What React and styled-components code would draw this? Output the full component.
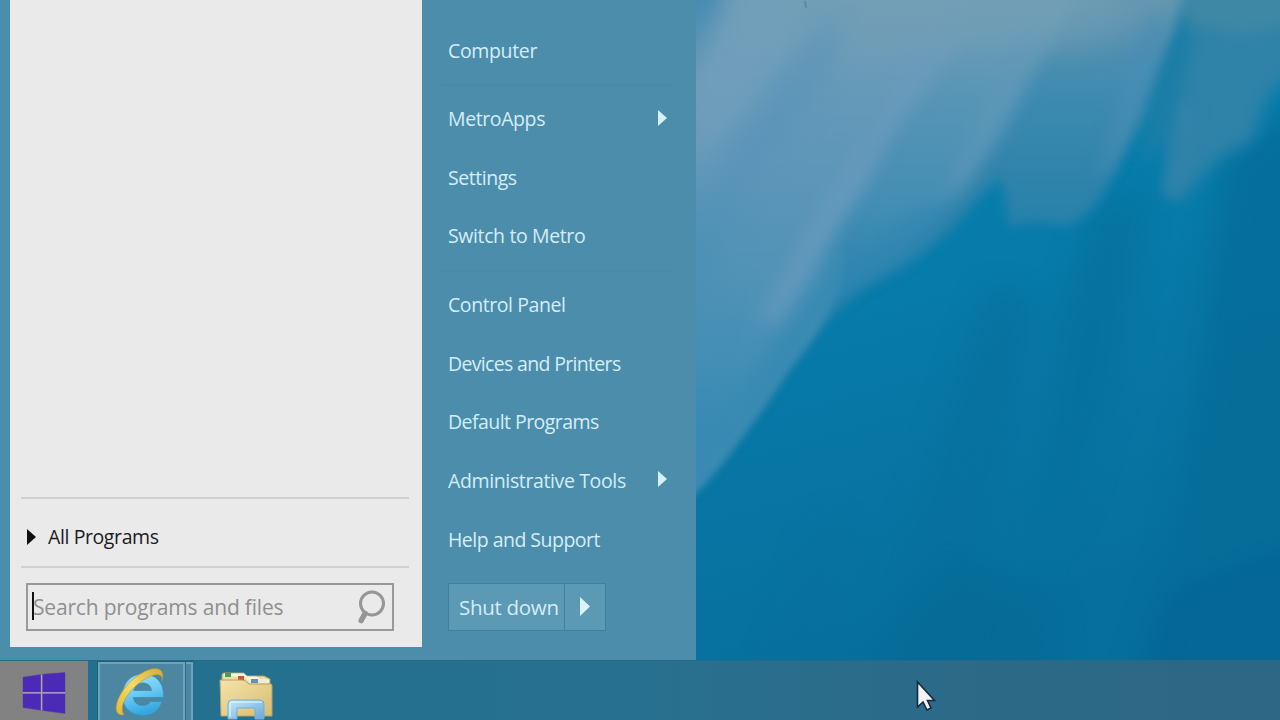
import React from "react";
import styled, { createGlobalStyle } from "styled-components";

const Global = createGlobalStyle`
  * { box-sizing: border-box; }
  html, body { margin: 0; padding: 0; }
  body {
    font-family: "Open Sans", "Noto Sans", sans-serif;
    overflow: hidden;
  }
`;

const Desktop = styled.div`
  position: relative;
  width: 1280px;
  height: 720px;
  display: grid;
  grid-template-rows: 660px 60px;
  overflow: hidden;
  background: #0674a2;
`;

const Workspace = styled.div`
  display: flex;
  min-height: 0;
`;

const StartMenu = styled.div`
  width: 696px;
  height: 660px;
  flex: none;
  display: flex;
  padding: 0 0 13px 10px;
  background: #4b8dab;
`;

const ProgramsPane = styled.div`
  width: 412px;
  display: flex;
  flex-direction: column;
  justify-content: flex-end;
  padding: 0 13px 16px 11px;
  background: #eaeaea;
`;

const PaneRule = styled.div`
  height: 2px;
  background: #d0d0d0;
`;

const AllPrograms = styled.div`
  height: 67px;
  display: flex;
  align-items: center;
  padding: 8px 0 0 6px;
  gap: 12px;
  color: #1c1a22;
  font-size: 19.5px;
`;

const SearchBox = styled.div`
  width: 368px;
  height: 48px;
  margin: 15px 0 0 5px;
  display: flex;
  align-items: center;
  justify-content: space-between;
  padding: 0 6px 0 5px;
  border: 2px solid #999;
  color: #8f8f8f;
  font-size: 21px;
`;

const Field = styled.div`
  display: flex;
  align-items: center;
`;

const Caret = styled.div`
  width: 2px;
  height: 28px;
  margin: 0 -1px 2px -1px;
  background: #111;
`;

const Label = styled.span`
  white-space: pre;
  line-height: 28px;
  letter-spacing: ${(p) => p.$track || 0}px;
`;

const LinksPane = styled.div`
  width: 274px;
  display: flex;
  flex-direction: column;
  padding: 21.4px 22px 0 20px;
  color: #d4edf8;
  font-size: 19.5px;
`;

const MenuLink = styled.div`
  height: 58.7px;
  flex: none;
  display: flex;
  align-items: center;
  justify-content: space-between;
  padding: 0 7px 0 6px;
`;

const LinkRule = styled.div`
  height: 9.7px;
  flex: none;
  display: flex;
  align-items: center;
  &::before {
    content: "";
    flex: 1;
    height: 2px;
    background: #488aa9;
  }
`;

const ArrowSlot = styled.span`
  display: flex;
  padding-bottom: ${(p) => p.$lift || 0}px;
`;

const PowerGroup = styled.div`
  width: 158px;
  height: 48px;
  margin: 13.6px 0 0 6px;
  display: flex;
  border: 1px solid #3d7f9f;
  background: #5c99b5;
  font-size: 20.5px;
`;

const PowerButton = styled.div`
  width: ${(p) => p.$w}px;
  display: flex;
  align-items: center;
  justify-content: ${(p) => (p.$split ? "center" : "flex-start")};
  padding-left: ${(p) => (p.$split ? 0 : 10)}px;
  border-left: ${(p) => (p.$split ? "1px solid #417f9f" : "0")};
`;

const Wallpaper = styled.svg`
  display: block;
  flex: none;
`;

const Taskbar = styled.div`
  display: flex;
  border-top: 1px solid #246987;
  background: linear-gradient(90deg, #21708f 0%, #28708f 50%, #2c6a88 75%, #2c6785 100%);
`;

const StartButton = styled.div`
  width: 88px;
  height: 59px;
  padding: 11px 0 0 22px;
  background: #828282;
`;

const TaskStack = styled.div`
  width: 96px;
  height: 59px;
  margin-left: 9px;
  display: flex;
  border: 1px solid #1f5f7c;
  border-right: 0;
  border-bottom: 0;
`;

const TaskButton = styled.div`
  width: ${(p) => p.$w}px;
  height: 58px;
  display: flex;
  padding: ${(p) => p.$pad || "0"};
  border: 2px solid #6fa3ba;
  border-bottom: 0;
  background: #4c86a1;
  & + & {
    margin-left: 1px;
    border-left-width: 0;
  }
`;

const PinnedButton = styled.div`
  padding: 9px 0 0 25px;
`;

const Pointer = styled.svg`
  position: absolute;
  left: 914px;
  top: 679px;
`;

const Arrow = ({ color, w = 9, h = 16 }) => (
  <svg width={w} height={h} viewBox="0 0 9 16" preserveAspectRatio="none">
    <path d="M0 0L9 8L0 16Z" fill={color} />
  </svg>
);

const Magnifier = () => (
  <svg width="30" height="36" viewBox="0 0 30 36" fill="none" stroke="#969696">
    <circle cx="16" cy="14.500" r="11.500" strokeWidth="3" />
    <path d="M9 24.500L5.200 31.500" strokeWidth="5.500" strokeLinecap="round" />
  </svg>
);

const WindowsLogo = () => (
  <svg width="46" height="44" viewBox="0 0 46 44">
    <g fill="#4b2bb5" stroke="#5a3aa0" strokeWidth=".5">
      <path d="M1 5.2L18.7 2.6V20H1Z" />
      <path d="M20.5 2.3L43 .5V20H20.5Z" />
      <path d="M1 21.5H18.7V38.3L1 35.6Z" />
      <path d="M20.5 21.5H43V41.5L20.5 38.5Z" />
    </g>
    <path d="M19.6 2.5V38.5M1 20.8H43" stroke="#b5a0cc" strokeWidth="1.2" />
  </svg>
);

const InternetExplorer = () => (
  <svg width="56" height="54" viewBox="0 0 56 54">
    <defs>
      <linearGradient id="ieBlue" x1="0" y1="0" x2="0.3" y2="1">
        <stop offset="0" stopColor="#a4e0f7" />
        <stop offset=".5" stopColor="#70cdf4" />
        <stop offset="1" stopColor="#35a7e0" />
      </linearGradient>
      <linearGradient id="ieGold" x1="1" y1="0" x2="0" y2="1">
        <stop offset="0" stopColor="#d3a935" />
        <stop offset=".5" stopColor="#f5dc66" />
        <stop offset="1" stopColor="#e0b83a" />
      </linearGradient>
    </defs>
    <path
      fillRule="evenodd"
      fill="url(#ieBlue)"
      stroke="#3a8db9"
      strokeWidth=".7"
      d="M50.500 30.500H20.500C21 35.500 24.500 38.500 29.500 38.500C33.500 38.500 36 37 37.500 34.500H49C46.500 43.500 39.500 48.500 30 48.500C17.500 48.500 9.500 40.500 9.500 28.500C9.500 16 18 7 30 7C43 7 51.500 16 50.500 30.500ZM20.800 23.500H38.500C38 18.500 34.500 16 29.800 16C25 16 21.700 19 20.800 23.500Z"
    />
    <path
      fill="url(#ieGold)"
      stroke="#b8922e"
      strokeWidth=".6"
      d="M47.500 8.500C43 5.500 31 10.500 20.500 21C10 31.500 7 42.500 11 47.500C4.500 49.500 1 44 4.500 34C9 21 23 6.500 37.500 2.200C46.500 -.2 52 4 49 13.500C49.200 11 48.800 9.500 47.500 8.500Z"
    />
  </svg>
);

const Explorer = () => (
  <svg width="58" height="50" viewBox="-1 0 58 50">
    <defs>
      <linearGradient id="folderFace" x1="0" y1="0" x2="1" y2="1">
        <stop offset="0" stopColor="#f5e3aa" />
        <stop offset="1" stopColor="#d8bd72" />
      </linearGradient>
      <linearGradient id="standBlue" x1="0" y1="0" x2="1" y2="1">
        <stop offset="0" stopColor="#c5e8fa" />
        <stop offset="1" stopColor="#66a9d8" />
      </linearGradient>
    </defs>
    <path d="M3 5Q3 3 5 3H25L28 6H45L51 9V20H3Z" fill="#e8dda9" stroke="#b39d5b" />
    <path d="M5 5H24L28 8H37L41 11H50" fill="none" stroke="#f7f4e5" strokeWidth="3" />
    <rect x="6" y="3" width="6" height="4" fill="#3ea34b" />
    <rect x="19" y="6" width="6" height="4" fill="#c65a31" />
    <path d="M1 10H23Q27 10 30 14H52Q53 14 53 16V46H2Z" fill="url(#folderFace)" stroke="#bba062" />
    <path d="M28 9H46L50 13H31Z" fill="#f0ecd8" />
    <rect x="32" y="9" width="7" height="4" fill="#5795bb" />
    <path
      d="M9 49V34Q9 30 13 30H41Q45 30 45 34V49H36V38H18V49Z"
      fill="url(#standBlue)"
      stroke="#75afd4"
    />
    <path d="M11 32H43M11 33V47" stroke="#e4f7ff" strokeWidth="1.500" opacity=".75" />
  </svg>
);

const Blur = ({ id, amount }) => (
  <filter id={id} filterUnits="userSpaceOnUse" x="600" y="-100" width="780" height="860" colorInterpolationFilters="sRGB">
    <feGaussianBlur stdDeviation={amount} />
  </filter>
);

const Scenery = () => (
  <Wallpaper width="584" height="660" viewBox="696 0 584 660">
    <defs>
      <linearGradient id="deep" x1="0" y1="0" x2=".25" y2="1">
        <stop offset="0" stopColor="#0783b0" />
        <stop offset=".5" stopColor="#077baa" />
        <stop offset="1" stopColor="#076f9d" />
      </linearGradient>
      <linearGradient id="outer" gradientUnits="userSpaceOnUse" x1="0" y1="0" x2="0" y2="260">
        <stop offset="0" stopColor="#6396b0" />
        <stop offset=".35" stopColor="#3f8bb0" />
        <stop offset=".75" stopColor="#2c82aa" />
        <stop offset="1" stopColor="#2280ab" />
      </linearGradient>
      <linearGradient id="middle" gradientUnits="userSpaceOnUse" x1="0" y1="0" x2="0" y2="330">
        <stop offset="0" stopColor="#729fb5" />
        <stop offset=".3" stopColor="#5795b5" />
        <stop offset=".6" stopColor="#458eb3" />
        <stop offset="1" stopColor="#2080ae" />
      </linearGradient>
      <linearGradient id="inner" gradientUnits="userSpaceOnUse" x1="0" y1="0" x2="0" y2="480">
        <stop offset="0" stopColor="#719eb8" />
        <stop offset=".3" stopColor="#6097b9" />
        <stop offset=".6" stopColor="#4f92b6" />
        <stop offset="1" stopColor="#2f87b3" />
      </linearGradient>
      <Blur id="soft3" amount="3.500" />
      <Blur id="soft5" amount="5.500" />
      <Blur id="soft8" amount="8" />
      <Blur id="soft14" amount="14" />
    </defs>
    <rect x="696" y="0" width="584" height="660" fill="url(#deep)" />
    <g filter="url(#soft14)">
      <path d="M1095 210L1145 190L1115 380L1070 520L1030 560L1060 330Z" fill="#06709b" opacity=".75" />
      <path d="M990 290L1030 300L1000 480L950 680H860L920 500Z" fill="#076f9c" opacity=".7" />
      <path d="M1225 160L1320 90V700H1150L1175 540L1200 350Z" fill="#066c98" opacity=".85" />
      <path d="M920 600L960 560L1050 600L1060 700H850Z" fill="#066792" opacity=".55" />
      <path d="M1165 590L1310 540V690H1130Z" fill="#056493" opacity=".65" />
      <path d="M820 520L850 530L810 690H760Z" fill="#0a709d" opacity=".55" />
    </g>
    <g filter="url(#soft8)">
      <path
        d="M1170 -30H1310V60L1268 95L1252 140L1218 158L1182 200L1164 196L1172 130L1185 70Z"
        fill="#2f82a8"
      />
      <path d="M1165 20L1195 30L1180 90L1168 140L1140 165L1150 80Z" fill="#1b7ea6" />
      <path d="M1185 -30H1310V20L1240 35L1180 20Z" fill="#428aa5" opacity=".8" />
    </g>
    <g filter="url(#soft5)">
      <path
        d="M680 -30H1192L1174 30L1156 70L1141 118L1116 168L1096 206L1068 227L1035 222L1009 227L1002 178L983 194L953 229L916 260L862 289L836 310L812 340L700 488L680 480Z"
        fill="url(#outer)"
      />
      <path d="M1180 100L1200 110L1185 170L1178 195L1165 195L1172 150Z" fill="#3283ab" opacity=".7" />
    </g>
    <g filter="url(#soft8)">
      <path d="M1168 20L1155 70L1140 115L1118 155L1098 190L1108 140L1128 70L1142 10Z" fill="#4a8db3" opacity=".7" />
      <path
        d="M680 -30H1085L1060 27L1028 83L1002 133L968 187L925 240L870 278L820 310L680 430Z"
        fill="url(#middle)"
      />
      <path d="M1060 20L1028 83L1002 133L970 180L945 195L982 110L1020 20Z" fill="#6098b8" opacity=".6" />
      <path d="M920 210L960 200L900 262L858 286L820 320L830 270Z" fill="#3086b0" opacity=".7" />
    </g>
    <g filter="url(#soft3)">
      <path d="M680 250H845L840 285L826 318L812 340L790 368L765 406L728 456L699 490L680 510Z" fill="#3a8bb3" />
    </g>
    <g filter="url(#soft8)">
      <path d="M680 -30H990L950 60L923 93L893 133L870 180L840 227L814 280L784 325L740 390L680 460Z" fill="url(#inner)" />
      <path d="M950 55L920 93L892 133L868 180L838 227L810 280L780 325L755 320L800 240L845 165L885 110L915 50Z" fill="#6b9bbd" opacity=".55" />
    </g>
    <g filter="url(#soft14)">
      <path d="M740 -30H1175L1140 20L1080 45L900 50L760 65Z" fill="#739eb4" opacity=".6" />
      <path d="M690 80L750 -10H815L755 100L690 180Z" fill="#739fbb" opacity=".7" />
      <path d="M825 20L845 30L790 130L730 200L700 290L690 240L740 140Z" fill="#5692b8" opacity=".65" />
      <path d="M680 -30H735L680 75Z" fill="#4088b2" />
      <path d="M680 230L730 200L705 350L680 370Z" fill="#4a90b4" opacity=".6" />
      <path d="M1120 -30H1190L1150 20L1110 40Z" fill="#6495ad" opacity=".5" />
    </g>
    <path d="M805 1L806 8" stroke="#517c94" strokeWidth="2" opacity=".6" />
  </Wallpaper>
);

const groups = [
  [{ text: "Computer", track: -0.35 }],
  [
    { text: "MetroApps", track: -0.4, arrow: true },
    { text: "Settings", track: -0.45 },
    { text: "Switch to Metro", track: -0.38 },
  ],
  [
    { text: "Control Panel", track: -0.42 },
    { text: "Devices and Printers", track: -0.67 },
    { text: "Default Programs", track: -0.55 },
    { text: "Administrative Tools", track: -0.37, arrow: true },
    { text: "Help and Support", track: -0.52 },
  ],
];

export default function App() {
  return (
    <>
      <Global />
      <Desktop>
        <Workspace>
          <StartMenu>
            <ProgramsPane>
              <PaneRule />
              <AllPrograms>
                <Arrow color="#111" />
                <Label $track={-0.4}>All Programs</Label>
              </AllPrograms>
              <PaneRule />
              <SearchBox>
                <Field>
                  <Caret />
                  <Label $track={-0.18}>Search programs and files</Label>
                </Field>
                <Magnifier />
              </SearchBox>
            </ProgramsPane>
            <LinksPane>
              {groups.map((group, i) => (
                <React.Fragment key={i}>
                  {i > 0 && <LinkRule />}
                  {group.map((item) => (
                    <MenuLink key={item.text}>
                      <Label $track={item.track}>{item.text}</Label>
                      {item.arrow && (
                        <ArrowSlot $lift={3}>
                          <Arrow color="#d6f0fa" />
                        </ArrowSlot>
                      )}
                    </MenuLink>
                  ))}
                </React.Fragment>
              ))}
              <PowerGroup>
                <PowerButton $w={115}>
                  <Label $track={-0.3}>Shut down</Label>
                </PowerButton>
                <PowerButton $w={41} $split>
                  <Arrow color="#dff1fa" w={10} h={19} />
                </PowerButton>
              </PowerGroup>
            </LinksPane>
          </StartMenu>
          <Scenery />
        </Workspace>
        <Taskbar>
          <StartButton>
            <WindowsLogo />
          </StartButton>
          <TaskStack>
            <TaskButton $w={87} $pad="3px 0 0 13px">
              <InternetExplorer />
            </TaskButton>
            <TaskButton $w={7} />
          </TaskStack>
          <PinnedButton>
            <Explorer />
          </PinnedButton>
        </Taskbar>
        <Pointer width="24" height="34" viewBox="0 0 24 34">
          <path
            d="M3.500 3V28L9 23L13 31L17 29L13.500 21.500H20.500Z"
            fill="#f1f2f4"
            stroke="#17293a"
            strokeWidth="1.600"
          />
        </Pointer>
      </Desktop>
    </>
  );
}
